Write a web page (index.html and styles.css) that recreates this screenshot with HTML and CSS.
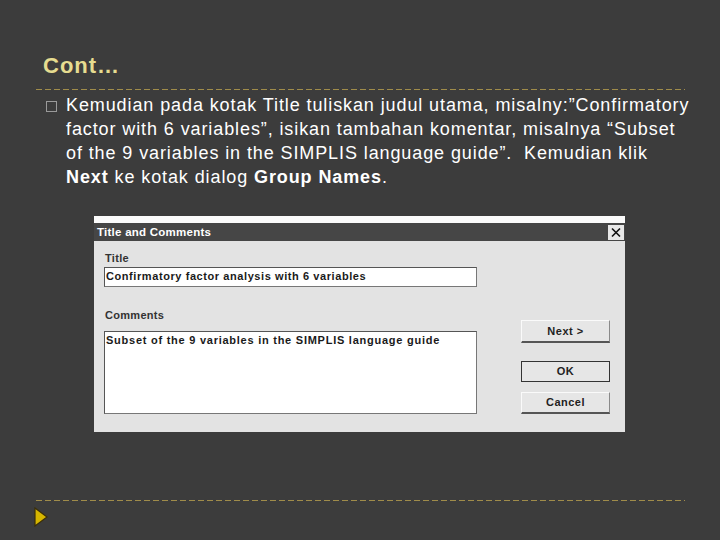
FILE: index.html
```html
<!DOCTYPE html>
<html>
<head>
<meta charset="utf-8">
<link rel="stylesheet" href="styles.css">
</head>
<body>
<div class="slide">
  <h1 class="title">Cont…</h1>
  <div class="rule"></div>
  <div class="item">
    <span class="bullet"></span>
    <p class="text">Kemudian pada kotak Title tuliskan judul utama, misalny:”Confirmatory<br>factor with 6 variables”, isikan tambahan komentar, misalnya “Subset<br>of the 9 variables in the SIMPLIS language guide”.&nbsp; Kemudian klik<br><b>Next</b> ke kotak dialog <b>Group Names</b>.</p>
  </div>
  <div class="dialog">
    <div class="strip"></div>
    <div class="titlebar">
      <span class="caption">Title and Comments</span>
      <span class="close"><svg width="12" height="11" viewBox="0 0 12 11"><path d="M2 1.5L10 9.5M10 1.5L2 9.5" stroke="#111" stroke-width="1.6"/></svg></span>
    </div>
    <div class="dbody">
      <div class="fields">
        <div class="label">Title</div>
        <div class="input">Confirmatory factor analysis with 6 variables</div>
        <div class="label label2">Comments</div>
        <div class="area">Subset of the 9 variables in the SIMPLIS language guide</div>
      </div>
      <div class="buttons">
        <div class="btn next">Next &gt;</div>
        <div class="btn ok">OK</div>
        <div class="btn cancel">Cancel</div>
      </div>
    </div>
  </div>
  <div class="rule rule2"></div>
  <svg class="arrow" width="14" height="20" viewBox="0 0 14 20"><path d="M1 1L13 10L1 19Z" fill="#d6b600" stroke="#3a2e0a" stroke-width="1.2"/></svg>
</div>
</body>
</html>
```
FILE: styles.css
```css
html, body {
  margin: 0;
  padding: 0;
}
body {
  width: 720px;
  height: 540px;
  background: #3c3c3c;
  font-family: "Liberation Sans", Arial, sans-serif;
  overflow: hidden;
}
.slide {
  padding: 52px 35px 0 36px;
}
.title {
  margin: 0 0 0 7px;
  font-size: 22px;
  font-weight: bold;
  line-height: 28px;
  height: 37px;
  color: #e6dc90;
  letter-spacing: 1px;
}
.rule {
  height: 1px;
  width: 649px;
  background: repeating-linear-gradient(to right, #a08c4a 0 6px, transparent 6px 9px);
}
.item {
  display: flex;
  align-items: flex-start;
  margin-top: 3px;
}
.bullet {
  flex: none;
  width: 9px;
  height: 9px;
  border: 1px solid #9a9a9a;
  margin: 8px 0 0 10px;
}
.text {
  margin: 0 0 0 9px;
  font-size: 18px;
  line-height: 24px;
  color: #ffffff;
  white-space: nowrap;
  letter-spacing: 0.9px;
}
.dialog {
  margin: 27px 0 0 58px;
  width: 531px;
  height: 216px;
  background: #e3e3e3;
  font-family: "Liberation Sans", Arial, sans-serif;
  font-weight: bold;
}
.strip {
  height: 7px;
  background: #fbfbfb;
}
.titlebar {
  height: 18px;
  background: #464646;
  display: flex;
  align-items: center;
  justify-content: space-between;
  padding: 0 1px 0 3px;
}
.caption {
  color: #ffffff;
  font-size: 11.5px;
  letter-spacing: 0.25px;
}
.close {
  width: 16px;
  height: 15px;
  background: #e8e8e8;
  display: flex;
  align-items: center;
  justify-content: center;
}
.dbody {
  display: flex;
  padding: 0 0 0 10px;
}
.fields {
  width: 373px;
  padding-top: 10px;
}
.label {
  font-size: 11px;
  line-height: 14px;
  height: 14px;
  color: #333;
  padding-left: 1px;
  margin-bottom: 2px;
  letter-spacing: 0.3px;
}
.label2 {
  margin-top: 21px;
  margin-bottom: 9px;
}
.input, .area {
  box-sizing: border-box;
  background: #ffffff;
  border: 1px solid #555;
  border-right-color: #777;
  border-bottom-color: #777;
  font-size: 11px;
  color: #1a1a1a;
  padding-left: 1px;
  white-space: nowrap;
}
.input {
  height: 20px;
  line-height: 17px;
  letter-spacing: 0.58px;
}
.area {
  height: 83px;
  line-height: 16px;
  letter-spacing: 0.75px;
}
.buttons {
  margin-left: 44px;
  padding-top: 79px;
  width: 89px;
}
.btn {
  box-sizing: border-box;
  width: 89px;
  background: #e6e6e6;
  border-top: 1px solid #fafafa;
  border-left: 1px solid #fafafa;
  border-right: 1px solid #8a8a8a;
  border-bottom: 2px solid #555;
  font-size: 11px;
  color: #222;
  text-align: center;
  letter-spacing: 0.5px;
}
.next {
  height: 23px;
  line-height: 20px;
}
.ok {
  margin-top: 18px;
  height: 21px;
  line-height: 19px;
  border: 1px solid #333;
}
.cancel {
  margin-top: 10px;
  height: 22px;
  line-height: 19px;
}
.rule2 {
  margin-top: 68px;
}
.arrow {
  display: block;
  margin: 6px 0 0 -2px;
}
```
